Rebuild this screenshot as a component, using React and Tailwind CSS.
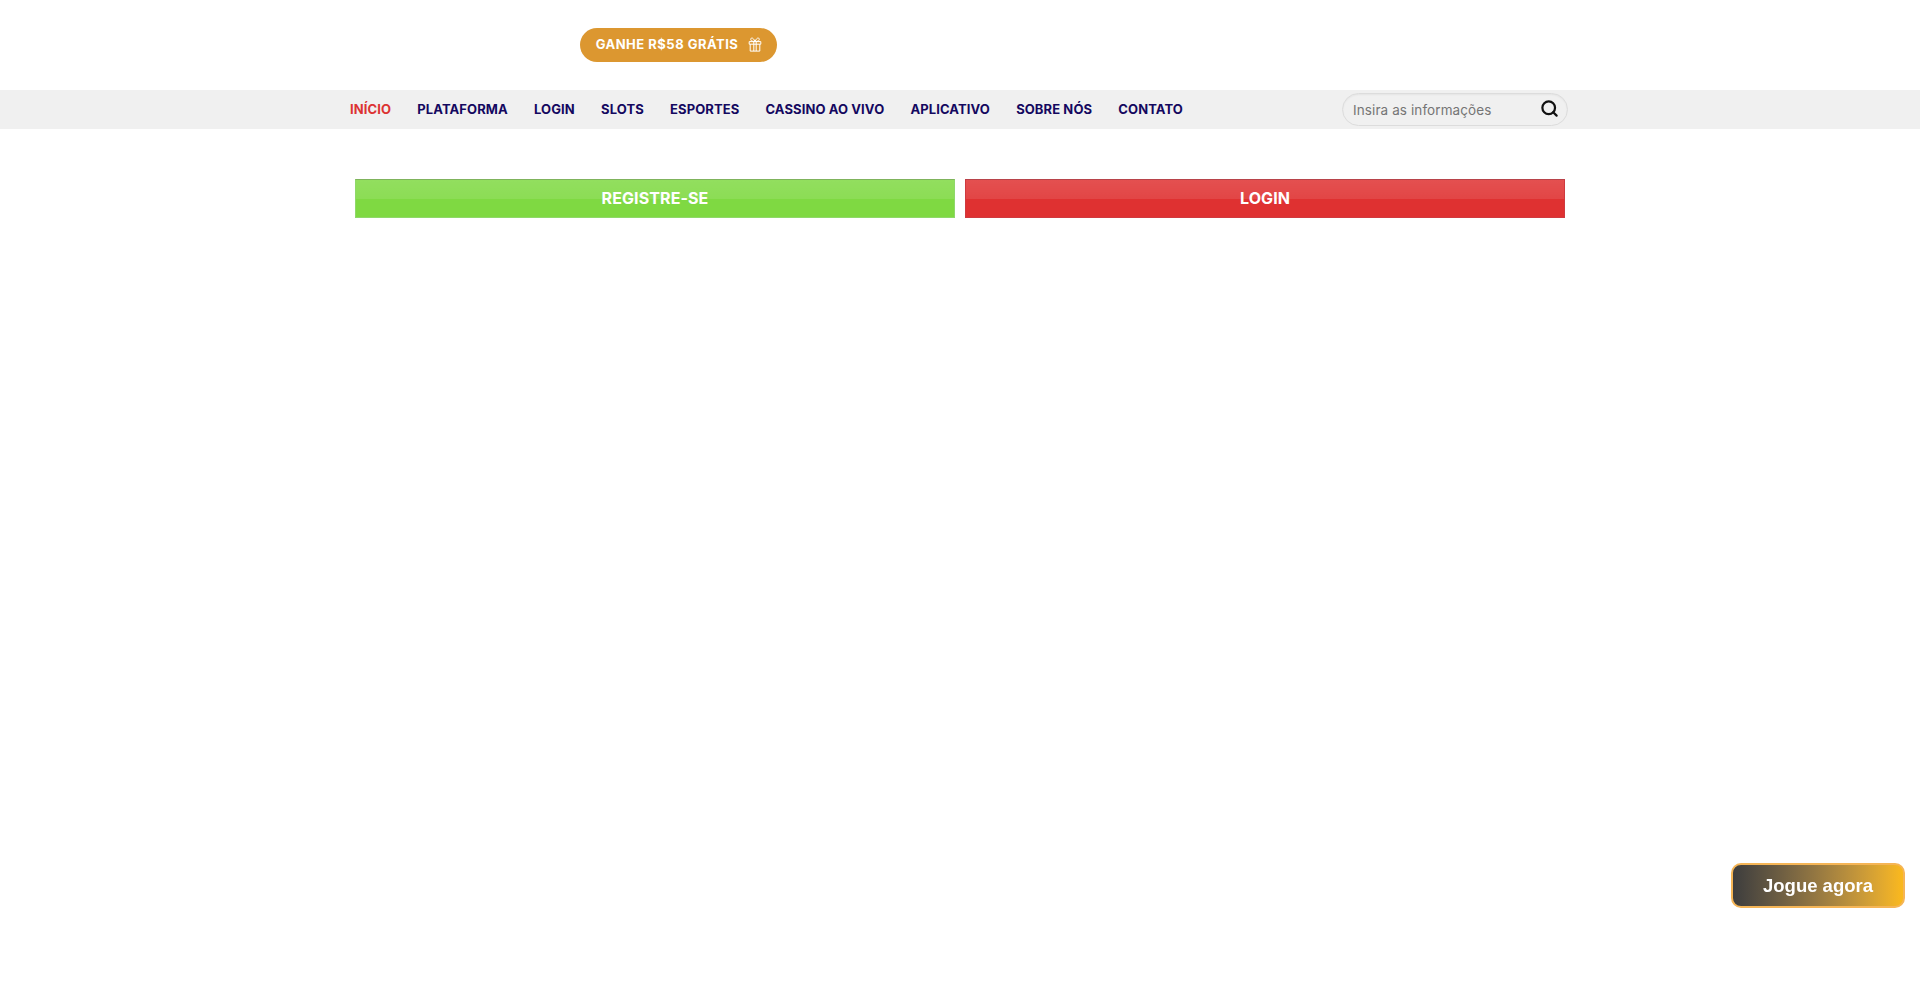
import React from "react";
import { Search } from "lucide-react";

const links = ["PLATAFORMA", "LOGIN", "SLOTS", "ESPORTES", "CASSINO AO VIVO", "APLICATIVO", "SOBRE NÓS", "CONTATO"];

const GiftIcon = () => (
  <svg width="14" height="15" viewBox="0 0 14 15" fill="none" stroke="currentColor" strokeWidth="1">
    <path d="M1.2 4.6h11.6v2.6H1.2z" />
    <path d="M2.2 7.2v6.9h9.6V7.2" />
    <path d="M5.8 4.6v9.5M8.2 4.6v9.5" />
    <path d="M7 4.4C6 2.2 4.9 1 3.9 1 2.8 1 2.4 2.2 3 3.2c.4.8 1.6 1.2 4 1.2z" />
    <path d="M7 4.4c1-2.2 2.1-3.4 3.1-3.4 1.1 0 1.5 1.2.9 2.2-.4.8-1.6 1.2-4 1.2z" />
  </svg>
);

const App = () => {
  return (
    <div className="min-h-screen bg-white font-['Inter',sans-serif]">
      <header className="h-[90px] w-[1220px] mx-auto flex items-start">
        <a className="ml-[230px] mt-[28px] h-[34px] w-[197px] rounded-full bg-[#dc9730] text-white text-[13px] font-bold tracking-[0.5px] flex items-center justify-center gap-[10px] pb-[1px] pl-[1px]">
          GANHE R$58 GRÁTIS
          <GiftIcon />
        </a>
      </header>

      <nav className="h-[39px] bg-[#f0f0f0]">
        <div className="w-[1220px] mx-auto h-full flex items-center justify-between pr-[2px]">
          <ul className="flex items-center gap-[26.2px] text-[13px] font-bold tracking-[0.1px] text-[#14085f]">
            <li className="text-[#dc3333]">INÍCIO</li>
            {links.map((l) => (
              <li key={l}>{l}</li>
            ))}
          </ul>
          <div className="w-[226px] h-[33px] rounded-full border border-[#dcdcdc] flex items-center pl-[10px] pr-[8px] shadow-[inset_0_1px_2px_rgba(0,0,0,0.05)]">
            <input
              placeholder="Insira as informações"
              className="flex-1 min-w-0 bg-transparent text-[13.5px] tracking-[0.1px] mt-[2px] outline-none placeholder:text-[#757575]"
            />
            <Search size={19} strokeWidth={2.8} className="text-[#111] mb-[2px]" />
          </div>
        </div>
      </nav>

      <div className="w-[1220px] mx-auto mt-[50px] pl-[5px] flex gap-[10px]">
        <a className="relative w-[600px] h-[39px] bg-[#7fd942] border border-[#8fd86a] border-t-[#7fb35c] text-white text-[16px] font-bold tracking-[0.1px] flex items-center justify-center pb-[2px]">
          <span className="absolute inset-x-0 top-0 h-[19px] bg-gradient-to-b from-white/15 to-white/10" />
          <span className="relative">REGISTRE-SE</span>
        </a>
        <a className="relative w-[600px] h-[39px] bg-[#df3131] border border-[#cf3a3f] border-t-[#b8434a] text-white text-[16px] font-bold tracking-[0.1px] flex items-center justify-center pb-[2px]">
          <span className="absolute inset-x-0 top-0 h-[19px] bg-gradient-to-b from-white/15 to-white/10" />
          <span className="relative">LOGIN</span>
        </a>
      </div>

      <a className="fixed left-[1731px] top-[863px] w-[174px] h-[45px] rounded-[10px] border-2 border-[#f5b556] bg-gradient-to-r from-[#3d3d3d] to-[#fbb91c] text-white text-[18.5px] font-bold font-['Liberation_Sans',sans-serif] flex items-center justify-center">
        Jogue agora
      </a>
    </div>
  );
};

export default App;
